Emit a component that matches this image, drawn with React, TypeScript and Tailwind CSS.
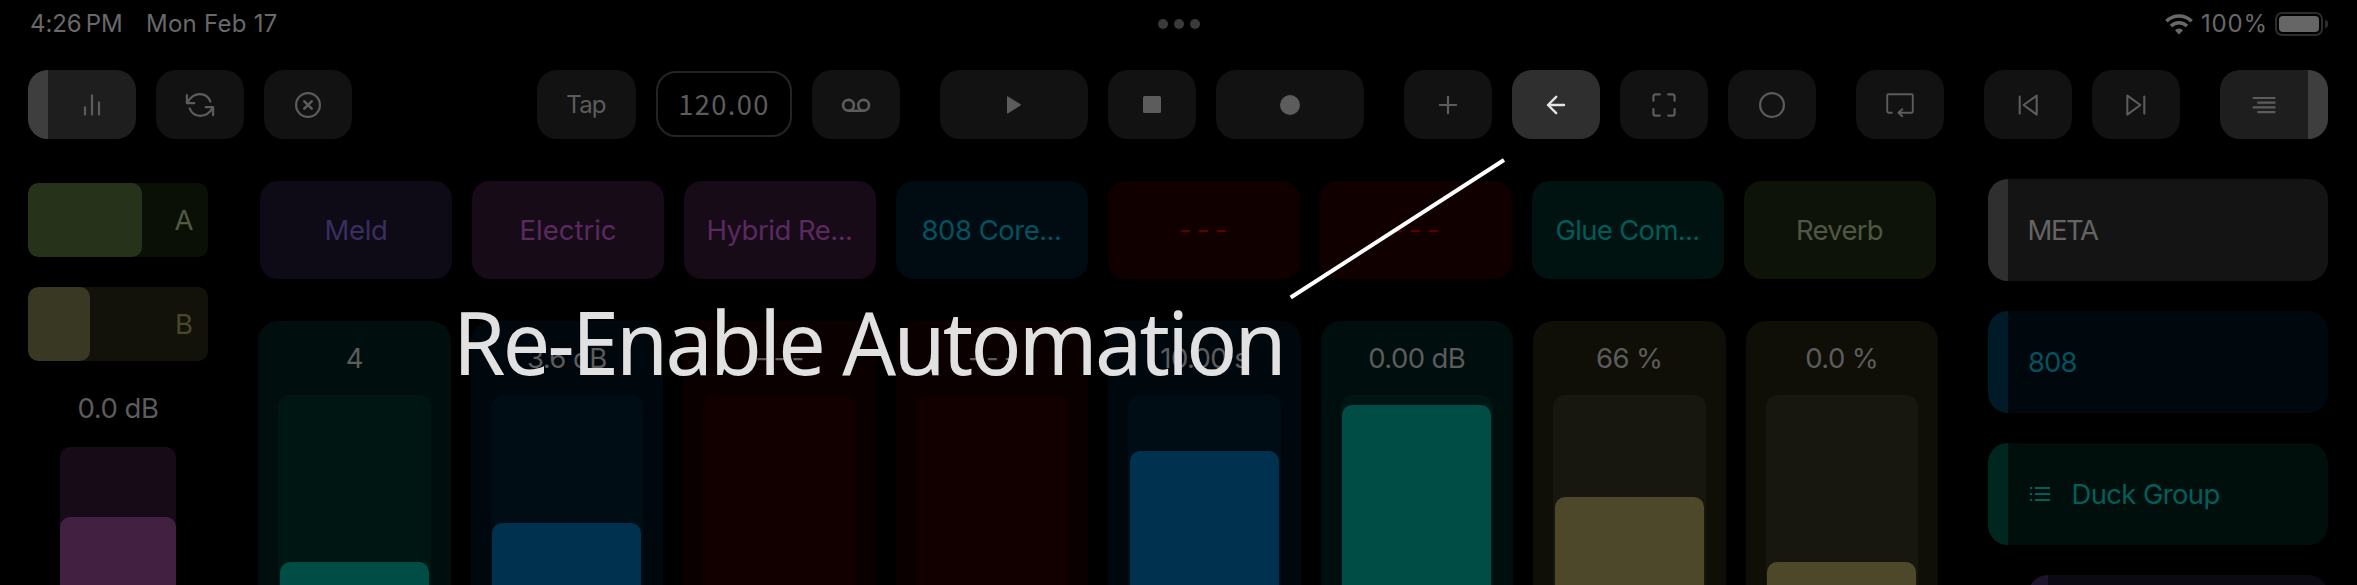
import type { ReactNode } from "react";

function Icon({ children, w = 2.2 }: { children: ReactNode; w?: number }) {
  return (
    <svg width="32" height="32" viewBox="0 0 32 32" fill="none" stroke="currentColor" strokeWidth={w} strokeLinecap="round" strokeLinejoin="round">
      {children}
    </svg>
  );
}

function Btn({ children, className = "" }: { children: ReactNode; className?: string }) {
  return (
    <button className={`flex h-[69px] shrink-0 items-center justify-center rounded-[20px] ${className}`}>{children}</button>
  );
}

const base = "w-[88px] bg-[#121212]";

function StatusBar() {
  return (
    <div className="flex h-[48px] items-center justify-between pr-[29px] pl-[30px] text-[24px] leading-none text-[#696969]">
      <div className="flex w-[400px] items-center whitespace-nowrap">
        <span className="w-[116px] tracking-[-0.1px]">4:26&#8201;PM</span>
        <span className="tracking-[0.25px]">Mon Feb 17</span>
      </div>
      <div className="flex gap-[6px] pr-px">
        <i className="size-[10px] rounded-full bg-[#3a3a3a]" />
        <i className="size-[10px] rounded-full bg-[#3a3a3a]" />
        <i className="size-[10px] rounded-full bg-[#3a3a3a]" />
      </div>
      <div className="flex w-[400px] items-center justify-end">
        <svg width="28" height="21" viewBox="0 0 28 21" fill="none" stroke="currentColor" strokeWidth="3.6">
          <path d="M1.4 7.2a18 18 0 0 1 25.2 0" />
          <path d="M6 12a11.4 11.4 0 0 1 16 0" />
          <path d="M14 20.4l-4-4.2a5.8 5.8 0 0 1 8 0z" fill="currentColor" stroke="none" />
        </svg>
        <span className="ml-[8px] w-[74px] tracking-[0.8px]">100%</span>
        <div className="h-[24px] w-[48px] rounded-[7px] border-2 border-[#2c2c2c] p-[2px]">
          <div className="h-full rounded-[4px] bg-[#666]" />
        </div>
        <i className="ml-[2px] h-[8px] w-[3px] rounded-r-full bg-[#2c2c2c]" />
      </div>
    </div>
  );
}

function Toolbar() {
  return (
    <div className="flex pt-[22px] pl-[28px] text-[#5c5c5c]">
      <Btn className="w-[108px] overflow-hidden bg-[#1e1e1e]">
        <div className="h-full w-[20px] bg-[#3e3e3e]" />
        <div className="flex flex-1 justify-center">
          <Icon w={2.2}>
            <path d="M9 18.4v7M16 6.4v19M23 13.4v12" />
          </Icon>
        </div>
      </Btn>
      <Btn className={`ml-[20px] ${base}`}>
        <Icon>
          <path d="M2.9 6.2v8h7.4M2.9 14.2C6 8.5 10.5 5.2 16 5.2c4.6 0 8.6 3 10.4 7.4M29.1 26.2v-8h-7.4M29.1 18.2C26 23.9 21.5 26.8 16 26.8c-4.6 0-8.6-3-10.4-7.4" />
          <path d="M2.9 14.2V10l2.6 1zM29.1 18.2v4.2l-2.6-1z" fill="currentColor" strokeWidth="1" />
        </Icon>
      </Btn>
      <Btn className={`ml-[20px] ${base}`}>
        <Icon>
          <circle cx="16" cy="16" r="11.9" />
          <path d="M12.3 12.3l7.4 7.4M19.7 12.3l-7.4 7.4" strokeWidth="2.6" />
        </Icon>
      </Btn>
      <Btn className="ml-[185px] w-[99px] bg-[#121212] pr-px text-[24px] tracking-[-0.8px]">Tap</Btn>
      <div className="mt-px ml-[20px] flex h-[66px] w-[136px] items-center justify-center rounded-[20px] border-2 border-[#242424] font-['Noto_Sans_CJK_SC',sans-serif] text-[27.3px] leading-[60px] tracking-[1.4px]">
        <span className="-mt-[2px]">120.00</span>
      </div>
      <Btn className={`ml-[20px] ${base}`}>
        <Icon w={2.6}>
          <circle cx="8.5" cy="16.3" r="5.4" />
          <circle cx="23.6" cy="16.3" r="5.4" />
          <path d="M8.5 21.7h15.1" />
        </Icon>
      </Btn>
      <Btn className="ml-[40px] w-[148px] bg-[#121212]">
        <Icon w={1}>
          <path d="M9.5 8v16.2L22.5 16z" fill="currentColor" />
        </Icon>
      </Btn>
      <Btn className={`ml-[20px] ${base}`}>
        <i className="h-[17px] w-[18px] rounded-[1.5px] bg-[#5c5c5c]" />
      </Btn>
      <Btn className="ml-[20px] w-[148px] bg-[#121212]">
        <i className="size-[20px] rounded-full bg-[#5c5c5c]" />
      </Btn>
      <Btn className={`ml-[40px] ${base}`}>
        <Icon>
          <path d="M7.8 16h16.4M16 7.8v16.4" />
        </Icon>
      </Btn>
      <Btn className="ml-[20px] w-[88px] bg-[#2f2f2f] text-[#e4e4e4]">
        <Icon w={2.4}>
          <path d="M24 16H8M16.2 7.8L8 16l8.2 8.2" />
        </Icon>
      </Btn>
      <Btn className={`ml-[20px] ${base}`}>
        <Icon w={2.2}>
          <path d="M5.4 11.8V7.6a2.2 2.2 0 0 1 2.2-2.2h4.2M20.2 5.4h4.2a2.2 2.2 0 0 1 2.2 2.2v4.2M26.6 20.2v4.2a2.2 2.2 0 0 1-2.2 2.2h-4.2M11.8 26.6H7.6a2.2 2.2 0 0 1-2.2-2.2v-4.2" />
        </Icon>
      </Btn>
      <Btn className={`ml-[20px] ${base}`}>
        <Icon>
          <circle cx="16" cy="16" r="11.9" />
        </Icon>
      </Btn>
      <Btn className={`ml-[40px] ${base}`}>
        <Icon w={1.9}>
          <path d="M7.8 23.7H4.6a1.4 1.4 0 0 1-1.4-1.4V6.6a1.4 1.4 0 0 1 1.4-1.4h22.8a1.4 1.4 0 0 1 1.4 1.4v15.7a1.4 1.4 0 0 1-1.4 1.4H14.4M18.3 20.2l-3.9 3.5 3.9 3.5" />
        </Icon>
      </Btn>
      <Btn className={`ml-[40px] ${base}`}>
        <Icon w={2.1}>
          <path d="M7.7 7.6v17M24.7 6.6v19L11.6 16z" />
        </Icon>
      </Btn>
      <Btn className={`ml-[20px] ${base}`}>
        <Icon w={2.1}>
          <path d="M24.3 7.6v17M7.3 6.6v19L20.4 16z" />
        </Icon>
      </Btn>
      <Btn className="ml-[40px] w-[108px] overflow-hidden bg-[#1e1e1e]">
        <div className="flex flex-1 justify-center">
          <Icon w={2.2}>
            <path d="M5.6 9h21M10.2 13.7h16.4M5.6 18.4h21M10.2 23.1h16.4" />
          </Icon>
        </div>
        <div className="h-full w-[20px] bg-[#3e3e3e]" />
      </Btn>
    </div>
  );
}

function Sends() {
  return (
    <div className="w-[180px] shrink-0 pt-[4px]">
      <div className="flex h-[74px] items-center overflow-hidden rounded-[10px] bg-[#0a1006] text-[#525a46]">
        <div className="h-full w-[114px] rounded-[10px] bg-[#27321a]" />
        <span className="flex-1 pt-px pr-[14.5px] text-right">A</span>
      </div>
      <div className="mt-[30px] flex h-[74px] items-center overflow-hidden rounded-[10px] bg-[#12120a] text-[#4b472a]">
        <div className="h-full w-[62px] rounded-[10px] bg-[#393822]" />
        <span className="flex-1 pt-[2px] pr-[15px] text-right">B</span>
      </div>
      <div className="mt-[26px] flex h-[42px] items-center justify-center pt-[2px] tracking-[-0.5px] text-[#5c5c5c]">0.0 dB</div>
      <div className="mt-[18px] ml-[32px] h-[138px] w-[116px] rounded-t-[10px] bg-[#170b17] pt-[70px]">
        <div className="h-[68px] rounded-t-[10px] bg-[#412042]" />
      </div>
    </div>
  );
}

const devices = [
  { name: "Meld", cls: "bg-[#0e0b17] text-[#3a2d60] tracking-[-0.4px]" },
  { name: "Electric", cls: "bg-[#180b18] text-[#592a5f]" },
  { name: "Hybrid Re...", cls: "bg-[#180b18] text-[#592a5f] tracking-[-0.5px] pr-px" },
  { name: "808 Core...", cls: "bg-[#000b12] text-[#00535f] tracking-[-0.5px] pr-px" },
  { name: "- - -", cls: "bg-[#110000] text-[#5c0000] tracking-[-1.2px] pr-[3px]" },
  { name: "- - -", cls: "bg-[#110000] text-[#5c0000] tracking-[-1.2px] pr-[3px]" },
  { name: "Glue Com...", cls: "bg-[#001311] text-[#005c58] tracking-[-0.7px] pr-px" },
  { name: "Reverb", cls: "bg-[#0e130a] text-[#505843] tracking-[-0.75px] pr-px" },
];

const teal = { card: "bg-[#000f0d]", slot: "bg-[#001613]", fill: "bg-[#004d45]" };
const blue = { card: "bg-[#00080d]", slot: "bg-[#000d14]", fill: "bg-[#00314e]" };
const red = { card: "bg-[#0b0000]", slot: "bg-[#120000]", fill: "" };
const olive = { card: "bg-[#0f0f08]", slot: "bg-[#17170f]", fill: "bg-[#4d482a]" };

const params = [
  { value: "4", level: 23, c: teal },
  { value: "3.6 dB", level: 62, c: blue },
  { value: "- - -", level: 0, c: red },
  { value: "- - -", level: 0, c: red },
  { value: "10.00 s", level: 134, c: blue },
  { value: "0.00 dB", level: 180, c: teal },
  { value: "66 %", level: 88, c: olive },
  { value: "0.0 %", level: 23, c: olive },
];

function Devices() {
  return (
    <div className="ml-[50px] w-[1680px] shrink-0 pt-[2px]">
      <div className="ml-[2px] flex gap-[20px]">
        {devices.map((d, i) => (
          <div key={i} className={`flex h-[98px] w-[192px] items-center justify-center rounded-[18px] pt-[2px] whitespace-nowrap ${d.cls}`}>
            {d.name}
          </div>
        ))}
      </div>
      <div className="mt-[42px] grid grid-cols-8 gap-[20px] text-[#5c5c5c]">
        {params.map((p, i) => (
          <div key={i} className={`flex h-[264px] flex-col rounded-t-[20px] px-[20px] ${p.c.card}`}>
            <div className={`flex h-[74px] items-center justify-center pt-[2px] whitespace-nowrap ${p.value === "- - -" ? "tracking-[-1.2px]" : "tracking-[-0.6px]"}`}>
              {p.value}
            </div>
            <div className={`flex flex-1 items-end rounded-t-[12px] px-[1.75px] ${p.c.slot}`}>
              <div className={`w-full rounded-t-[10px] ${p.c.fill}`} style={{ height: p.level }} />
            </div>
          </div>
        ))}
      </div>
    </div>
  );
}

function Track({ children, className, strip }: { children?: ReactNode; className: string; strip: string }) {
  return (
    <div className={`flex h-[102px] shrink-0 items-center overflow-hidden rounded-[20px] ${className}`}>
      <div className={`h-full w-[20px] ${strip}`} />
      {children}
    </div>
  );
}

function Tracks() {
  return (
    <div className="ml-[50px] flex h-[406px] w-[340px] flex-col gap-[30px] overflow-hidden">
      <Track className="bg-[#141414] text-[#646464]" strip="bg-[#2f2f2f]">
        <span className="pt-[2px] pl-[19.5px] tracking-[-1.4px]">META</span>
      </Track>
      <Track className="bg-[#00070d] text-[#00535f]" strip="bg-[#001a27]">
        <span className="pt-[2px] pl-[20px] tracking-[-0.9px]">808</span>
      </Track>
      <Track className="bg-[#000e0c] text-[#005f5b]" strip="bg-[#002620]">
        <svg className="ml-[21px]" width="22" height="16" viewBox="0 0 22 16" stroke="currentColor" strokeWidth="2">
          <path d="M1 2h2M1 8h2M1 14h2M6 2h15M6 8h15M6 14h15" />
        </svg>
        <span className="pt-[2px] pl-[20.5px] tracking-[-0.65px]">Duck Group</span>
      </Track>
      <Track className="ml-[40px] bg-[#0b0912]" strip="bg-[#1b142b]" />
    </div>
  );
}

export default function App() {
  return (
    <div className="relative h-[585px] w-[2357px] overflow-hidden bg-black font-['Inter',sans-serif] text-[27.5px] leading-none">
      <StatusBar />
      <Toolbar />
      <div className="mt-[40px] flex pl-[28px]">
        <Sends />
        <Devices />
        <Tracks />
      </div>
      <div className="absolute top-[291px] left-[453px] origin-left scale-x-[0.97] font-['Noto_Sans',sans-serif] text-[87px] leading-[100px] tracking-[-2.85px] whitespace-nowrap text-[#e1e1e1]">
        Re-Enable Automation
      </div>
      <svg className="absolute top-[150px] left-[1280px]" width="240" height="160" viewBox="0 0 240 160">
        <path d="M10.7 147.5L224 10" stroke="#fff" strokeWidth="4" />
      </svg>
    </div>
  );
}
